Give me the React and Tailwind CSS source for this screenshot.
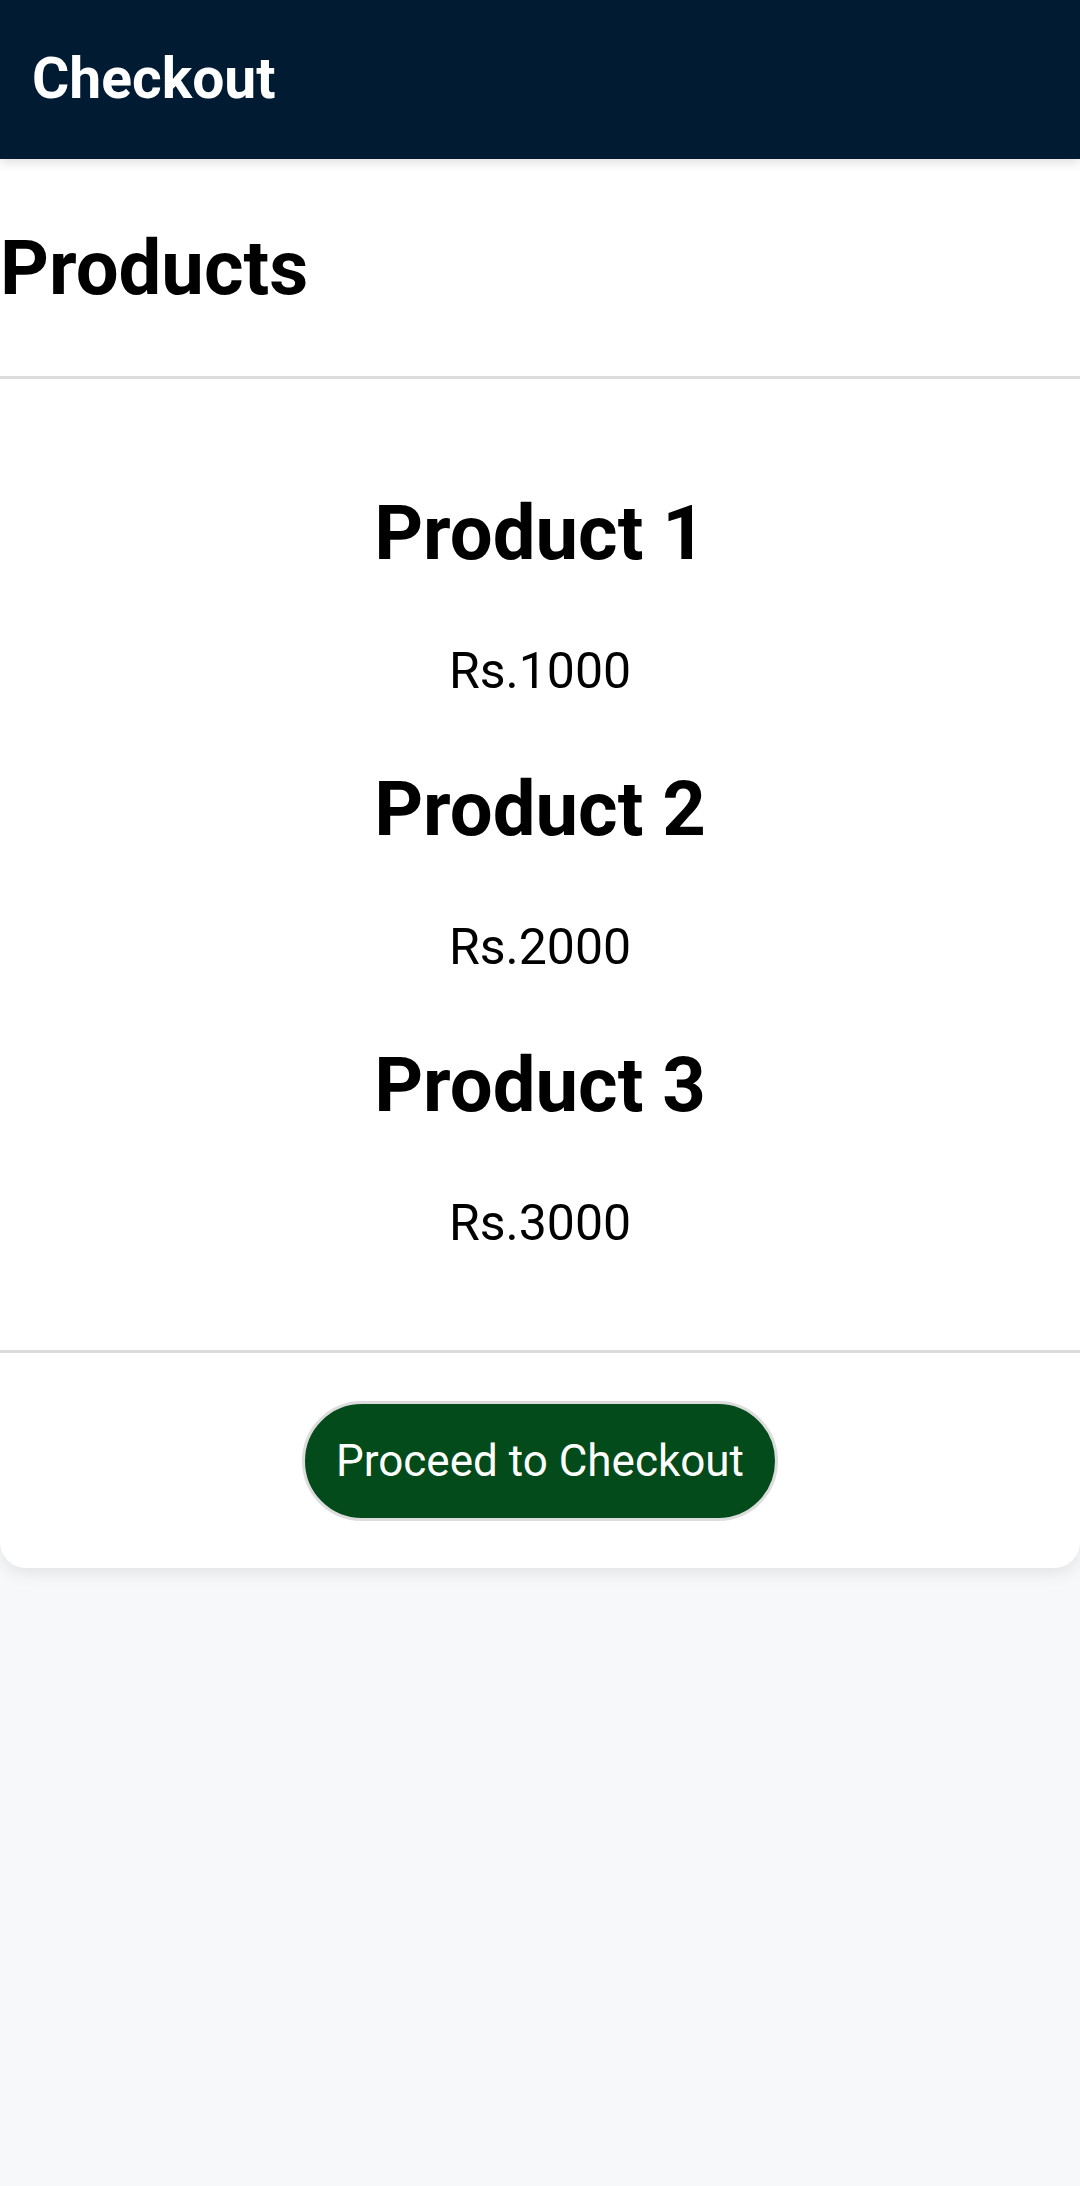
export default function App() {
  const products = [
    { name: "Product 1", price: "Rs.1000" },
    { name: "Product 2", price: "Rs.2000" },
    { name: "Product 3", price: "Rs.3000" },
  ];
  return (
    <div
      className="min-h-[2186px] bg-[#f7f8f9] text-black"
      style={{ fontFamily: "Roboto, 'Noto Sans', sans-serif" }}
    >
      <header className="relative z-10 h-[159px] bg-[#001b32] px-[32px] flex items-center shadow-[0_4px_10px_rgba(0,0,0,0.12)]">
        <h1 className="text-[57px] leading-[70px] font-bold text-white -mt-[2px]">
          Checkout
        </h1>
      </header>
      <main className="bg-white rounded-b-[26px] shadow-[0_6px_16px_rgba(0,0,0,0.08)]">
        <div className="h-[217px] pt-[61px]">
          <h2 className="text-[76px] leading-[96px] font-bold">Products</h2>
        </div>
        <div className="h-[3px] bg-[#dcdcdc]" />
        <div className="pt-[104px] pb-[97px] flex flex-col items-center gap-[58px]">
          {products.map((p) => (
            <div key={p.name} className="flex flex-col items-center gap-[58px]">
              <h3 className="text-[76px] leading-[100px] font-bold">{p.name}</h3>
              <p className="text-[50px] leading-[60px]">{p.price}</p>
            </div>
          ))}
        </div>
        <div className="h-[3px] bg-[#dcdcdc]" />
        <div className="flex justify-center pt-[48px] pb-[47px]">
          <button className="h-[120px] px-[31px] rounded-full border-[3px] border-[#dcdcdc] bg-[#034b1a] text-white text-[44px] leading-none">
            Proceed to Checkout
          </button>
        </div>
      </main>
    </div>
  );
}
